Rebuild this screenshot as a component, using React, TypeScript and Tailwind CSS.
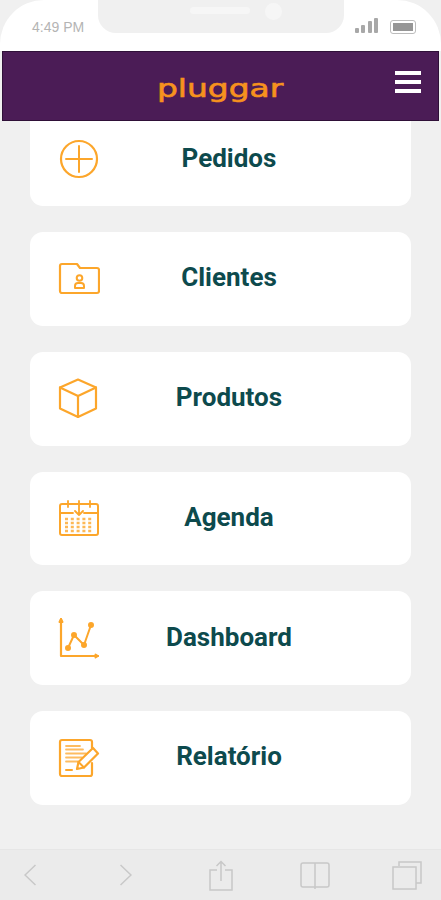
import type { ReactNode } from "react";

const iconClass = "w-[42px] h-[42px] text-[#fca62b]";

function Svg({ children }: { children: ReactNode }) {
  return (
    <svg viewBox="0 0 42 42" fill="none" stroke="currentColor" strokeWidth="2" strokeLinecap="round" strokeLinejoin="round" className={iconClass}>
      {children}
    </svg>
  );
}

const PlusIcon = () => (
  <Svg>
    <circle cx="21" cy="21" r="18" strokeWidth="2.200" />
    <path d="M8 21h26M21 8v26" />
  </Svg>
);

const FolderIcon = () => (
  <Svg>
    <path d="M2 8a2 2 0 0 1 2-2h15l3 4h17a2 2 0 0 1 2 2v21a2 2 0 0 1-2 2H4a2 2 0 0 1-2-2z" strokeWidth="2.200" />
    <circle cx="21.500" cy="20" r="2.800" />
    <path d="M17 30v-2a3 3 0 0 1 3-3h3a3 3 0 0 1 3 3v2z" />
  </Svg>
);

const BoxIcon = () => (
  <Svg>
    <path d="M20 1.500 38 9.500V30.500L20 39 2 30.500V9.500z" strokeWidth="2.200" />
    <path d="M2 9.500 20 18l18-8.500M20 18v21" strokeWidth="2.200" />
  </Svg>
);

const CalendarIcon = () => (
  <Svg>
    <rect x="2" y="7" width="38" height="31" rx="2" strokeWidth="2" />
    <path d="M2 16h13M26 16h14M21 4v14M17 14l4 4 4-4M10 4v6M32 4v6M14 7h-4M36 7h-4" strokeWidth="1.800" />
    <path
      d="M7 22h28M7 26h28M7 30h28M7 34h28"
      strokeDasharray="3 2.800"
      strokeLinecap="butt"
      strokeWidth="2.400"
      opacity="0.8"
    />
  </Svg>
);

const ChartIcon = () => (
  <Svg>
    <path d="M3 2v37h37" strokeWidth="2.200" />
    <path d="M1.500 5 3 2l1.500 3M37.500 37.500 40 39l-2.500 1.500" />
    <path d="M10 31 16 18l10 10 7-20" />
    <circle cx="10" cy="31" r="2" fill="currentColor" />
    <circle cx="16" cy="18" r="2" fill="currentColor" />
    <circle cx="26" cy="28" r="2" fill="currentColor" />
    <circle cx="33" cy="8" r="2" fill="currentColor" />
  </Svg>
);

const ReportIcon = () => (
  <Svg>
    <path d="M34 26v11a2 2 0 0 1-2 2H4a2 2 0 0 1-2-2V5a2 2 0 0 1 2-2h28a2 2 0 0 1 2 2v6" strokeWidth="2.200" />
    <path d="M8 9h14M8 12.500h17M8 16.500h20M8 20.500h16M8 24.500h12" strokeWidth="1.800" opacity="0.75" />
    <path d="M8 33h6" />
    <path d="M19 32l1.500-7L35 11l5 5.500L26 30.500z" strokeWidth="2.200" />
    <path d="M20.500 25l5.500 5.500" />
  </Svg>
);

const items: { label: string; icon: ReactNode }[] = [
  { label: "Pedidos", icon: <PlusIcon /> },
  { label: "Clientes", icon: <FolderIcon /> },
  { label: "Produtos", icon: <BoxIcon /> },
  { label: "Agenda", icon: <CalendarIcon /> },
  { label: "Dashboard", icon: <ChartIcon /> },
  { label: "Relatório", icon: <ReportIcon /> },
];

function StatusBar() {
  return (
    <div className="h-[51px] bg-white rounded-t-[44px] flex justify-between relative">
      <span className="ml-[32px] mt-[19px] text-[14px] leading-[16px] text-[#b4b4b4] font-['Liberation_Sans',sans-serif]">4:49 PM</span>
      <div className="w-[246px] h-[33px] bg-[#f0f0f0] rounded-b-[18px] flex items-start pl-[92px] pt-[3px] gap-[15px] absolute left-[98px] top-0">
        <div className="w-[60px] h-[7px] mt-[4px] rounded-full bg-[#f6f6f6]" />
        <div className="w-[17px] h-[17px] rounded-full bg-[#f6f6f6]" />
      </div>
      <div className="flex items-start gap-[12px] mr-[25px] mt-[18px]">
        <div className="flex items-end gap-[2.500px] h-[15px]">
          <div className="w-[4px] h-[5px] rounded-[1px] bg-[#a8a8a8]" />
          <div className="w-[4px] h-[8px] rounded-[1px] bg-[#a8a8a8]" />
          <div className="w-[4px] h-[12px] rounded-[1px] bg-[#a8a8a8]" />
          <div className="w-[4px] h-[15px] rounded-[1px] bg-[#a8a8a8]" />
        </div>
        <div className="w-[26px] h-[14px] mt-[2px] border border-[#bcbcbc] rounded-[3px] p-[2px]">
          <div className="w-full h-full bg-[#969696]" />
        </div>
      </div>
    </div>
  );
}

function Header() {
  return (
    <div className="h-[70px] mx-[2px] bg-[#4b1c56] border border-[#2f1038] flex items-center justify-center relative">
      <span className="mt-[6px] scale-x-[1.37] text-[#f7921e] text-[24px] leading-[30px] [-webkit-text-stroke:0.6px_#f7921e] font-['DejaVu_Sans',sans-serif]">pluggar</span>
      <div className="absolute right-[17px] top-[19px] w-[26px] flex flex-col gap-[5px]">
        <div className="h-[4px] bg-white" />
        <div className="h-[4px] bg-white" />
        <div className="h-[4px] bg-white" />
      </div>
    </div>
  );
}

function BottomBar() {
  return (
    <div className="h-[51px] bg-[#ebebeb] border-t border-[#e6e6e6] flex items-center pl-[24px] text-[#c8c8c8]">
      <svg viewBox="0 0 12 22" className="w-[12px] h-[22px]" fill="none" stroke="currentColor" strokeWidth="1.500">
        <path d="M11.500 1 1 11l10.500 10" />
      </svg>
      <svg viewBox="0 0 12 22" className="w-[12px] h-[22px] ml-[84px]" fill="none" stroke="currentColor" strokeWidth="1.500">
        <path d="M.5 1 11 11 .5 21" />
      </svg>
      <svg viewBox="0 0 24 31" className="w-[24px] h-[31px] ml-[77px]" fill="none" stroke="currentColor" strokeWidth="1.500">
        <path d="M8 10H1v20h22V10h-7M12 21V2M7.500 6 12 1.500 16.500 6" />
      </svg>
      <svg viewBox="0 0 30 27" className="w-[30px] h-[27px] ml-[67px]" fill="none" stroke="currentColor" strokeWidth="1.500">
        <path d="M15 1H3a2 2 0 0 0-2 2v20a2 2 0 0 0 2 2h12zm0 0h12a2 2 0 0 1 2 2v20a2 2 0 0 1-2 2H15v2" />
      </svg>
      <svg viewBox="0 0 30 30" className="w-[30px] h-[30px] ml-[62px]" fill="none" stroke="currentColor" strokeWidth="1.500">
        <path d="M7 6V2h22v21h-5" />
        <rect x="1" y="7" width="23" height="22" />
      </svg>
    </div>
  );
}

export default function App() {
  return (
    <div className="w-[441px] h-[900px] bg-[#f0f0f0] flex flex-col overflow-hidden font-['Roboto',sans-serif]">
      <StatusBar />
      <Header />
      <div className="flex-1 overflow-hidden px-[30px] flex flex-col gap-[26px]">
        {items.map((item, i) => (
          <div
            key={item.label}
            className={`shrink-0 bg-white flex items-center pl-[28px] ${i === 0 ? "h-[85px] rounded-b-[13px] pb-[9px]" : "h-[93.750px] rounded-[13px]"}`}
          >
            {item.icon}
            <span className="flex-1 text-center pr-[53px] pb-[2px] text-[26px] font-bold text-[#0d4a4d]">{item.label}</span>
          </div>
        ))}
      </div>
      <BottomBar />
    </div>
  );
}
